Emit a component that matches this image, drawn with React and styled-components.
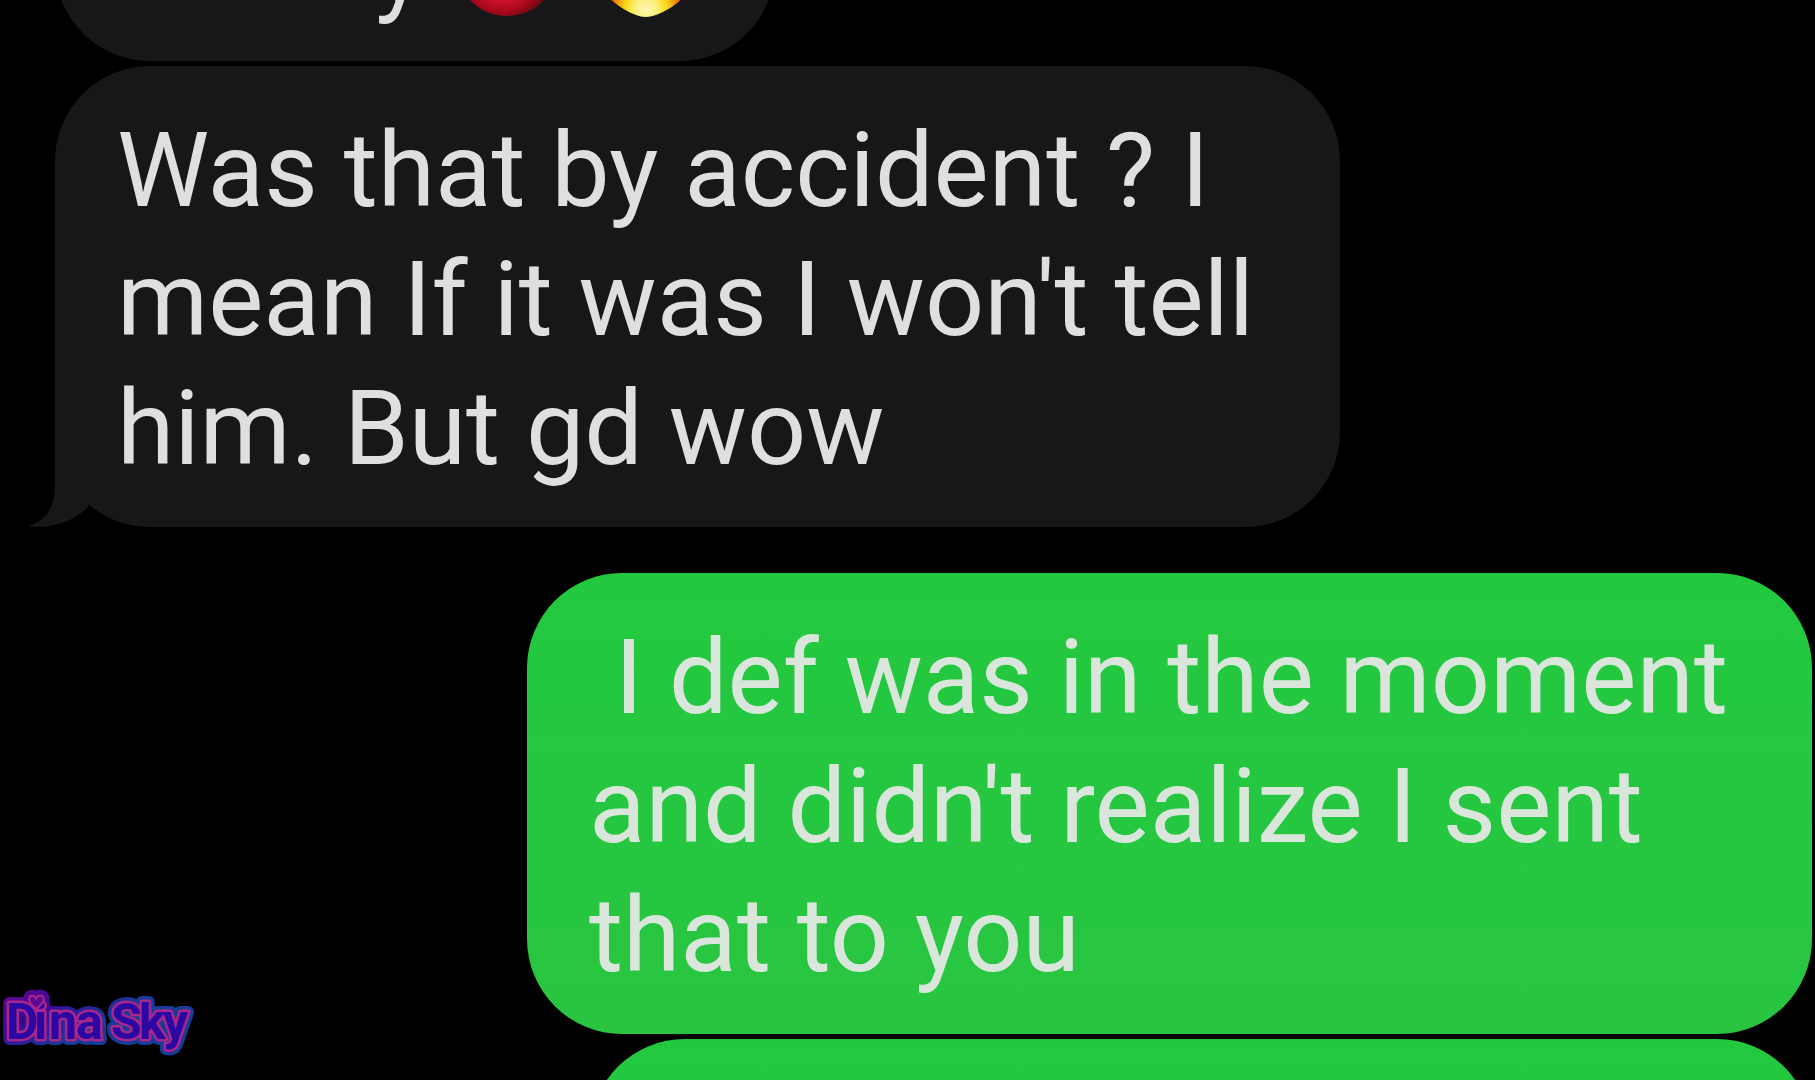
import React from 'react';
import styled, { createGlobalStyle } from 'styled-components';

const GlobalStyle = createGlobalStyle`
  *, *::before, *::after { box-sizing: border-box; }
  body { margin: 0; background: #000; overflow: hidden; }
`;

const Screen = styled.main`
  position: relative;
  height: 100vh;
  overflow: hidden;
  background: #000;
  font-family: Roboto, 'Liberation Sans', sans-serif;
`;

const Thread = styled.section`
  display: flex;
  flex-direction: column;
  gap: 46px;
  margin-top: -158px;
  padding: 0 3px 0 55px;
`;

const Group = styled.div`
  display: flex;
  flex-direction: column;
  gap: 5px;
  align-items: ${(p) => (p.$sent ? 'flex-end' : 'flex-start')};
`;

const Bubble = styled.article`
  position: relative;
  width: 100%;
  max-width: ${(p) => p.$width}px;
  padding: ${(p) => (p.$emoji ? '60px 77px 30px' : '40px 40px 34px 62px')};
  border-radius: 95px;
  color: ${(p) => (p.$sent ? '#dae6dc' : '#dfdfe1')};
  background: ${(p) => (p.$sent ? 'linear-gradient(#22c93f, #29c541)' : '#171719')};
`;

const Message = styled.p`
  margin: 0;
  font-size: 104px;
  line-height: 129px;
  white-space: nowrap;
`;

const EmojiMessage = styled(Message)`
  display: flex;
  justify-content: flex-end;
  gap: 29px;
`;

const Emoji = styled.svg`
  display: block;
  width: 108px;
  height: 108px;
  margin-top: 15px;
`;

const Tail = styled.svg`
  position: absolute;
  left: -27px;
  bottom: 0;
  width: 61px;
  height: 96px;
  fill: #171719;
`;

const Watermark = styled.svg`
  position: absolute;
  left: 0;
  bottom: 20px;
  width: 200px;
  height: 72px;
  font-family: Roboto, sans-serif;
  font-size: 50px;
  font-weight: 700;
  stroke-linejoin: round;
`;

function RedBall() {
  return (
    <Emoji viewBox="0 0 108 108" role="img" aria-label="red emoji">
      <defs>
        <radialGradient id="ball" cx="45%" cy="56%" r="52%">
          <stop offset="0" stopColor="#f24a62" />
          <stop offset=".5" stopColor="#d81432" />
          <stop offset=".8" stopColor="#9c0818" />
          <stop offset="1" stopColor="#5a0b12" />
        </radialGradient>
      </defs>
      <ellipse cx="54" cy="50" rx="50" ry="49" fill="url(#ball)" />
    </Emoji>
  );
}

function Fire() {
  return (
    <Emoji viewBox="0 0 108 108" role="img" aria-label="fire">
      <defs>
        <radialGradient id="flame" gradientUnits="userSpaceOnUse" cx="56" cy="92" r="42">
          <stop offset="0" stopColor="#fdf5b4" />
          <stop offset=".25" stopColor="#fbf080" />
          <stop offset=".5" stopColor="#f8d818" />
          <stop offset=".75" stopColor="#ee8410" />
          <stop offset="1" stopColor="#b02410" />
        </radialGradient>
      </defs>
      <path d="M54 3C58 25 90 42 99 70C98 80 80 93 66 98Q55 102 46 98C32 93 14 80 8 65C10 42 46 34 54 3Z" fill="url(#flame)" />
    </Emoji>
  );
}

function Logo() {
  const words = (
    <>
      <text x="6 34 49 76" y="51">Dina</text>
      <text x="111 139 163" y="51">Sky</text>
    </>
  );
  const heart = 'M36 21C28 15 28 9 31 8Q35 7 36 11Q38 6 42 8C46 10 43 16 36 21Z';
  return (
    <Watermark viewBox="0 0 200 72">
      <defs>
        <linearGradient id="glow" gradientUnits="userSpaceOnUse" x1="0" y1="0" x2="40" y2="70">
          <stop offset="0" stopColor="#6a0689" />
          <stop offset=".5" stopColor="#3a0a9c" />
          <stop offset="1" stopColor="#163b98" />
        </linearGradient>
      </defs>
      <g fill="url(#glow)" stroke="url(#glow)" strokeWidth="12" aria-hidden="true">
        {words}
        <path d={heart} />
      </g>
      <g stroke="#a9268a" strokeWidth="5" fill="none" aria-hidden="true">
        {words}
      </g>
      <g fill="#2b08a4">
        {words}
        <path d={heart} fill="#5c0a94" stroke="#a9268a" strokeWidth="2" />
      </g>
    </Watermark>
  );
}

export default function App() {
  return (
    <Screen>
      <GlobalStyle />
      <Thread>
        <Group>
          <Bubble $width={720} $emoji>
            <EmojiMessage>
              <span>y</span>
              <RedBall />
              <Fire />
            </EmojiMessage>
          </Bubble>
          <Bubble $width={1285}>
            <Message>
              Was that by accident ? I<br />
              mean If it was I won't tell<br />
              him. But gd wow
            </Message>
            <Tail viewBox="0 0 61 96" aria-hidden="true">
              <path d="M27 0V54C27 76 18 90 0 95C22 98 44 92 60 76V0Z" />
            </Tail>
          </Bubble>
        </Group>
        <Group $sent>
          <Bubble $width={1285} $sent>
            <Message>
              &nbsp;I def was in the moment<br />
              and didn't realize I sent<br />
              that to you
            </Message>
          </Bubble>
          <Bubble $width={1222} $sent>
            <Message>&nbsp;</Message>
          </Bubble>
        </Group>
      </Thread>
      <Logo />
    </Screen>
  );
}
